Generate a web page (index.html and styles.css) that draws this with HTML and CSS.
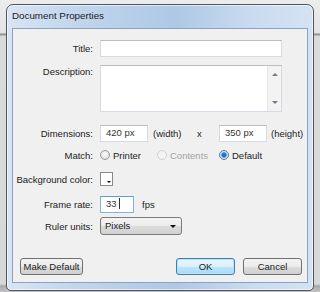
FILE: index.html
```html
<!DOCTYPE html>
<html lang="en">
<head>
    <meta charset="UTF-8">
    <title>Document Properties</title>
    <link rel="stylesheet" href="styles.css">
</head>
<body>

    <div class="window">
        <div class="titlebar">Document Properties</div>

        <div class="client">
            <div class="row row-title">
                <label class="lbl">Title:</label>
                <div class="field input w-title"></div>
            </div>

            <div class="row row-desc">
                <label class="lbl">Description:</label>
                <div class="field textarea">
                    <div class="scroll">
                        <span class="arr up"></span>
                        <span class="arr down"></span>
                    </div>
                </div>
            </div>

            <div class="row row-dim">
                <label class="lbl">Dimensions:</label>
                <div class="field input w-dim">420 px</div>
                <span class="unit">(width)</span>
                <span class="times">x</span>
                <div class="field input w-dim">350 px</div>
                <span class="unit-h">(height)</span>
            </div>

            <div class="row row-match">
                <label class="lbl">Match:</label>
                <div class="radio r1"><span class="dot"></span>Printer</div>
                <div class="radio r2 disabled"><span class="dot"></span>Contents</div>
                <div class="radio r3 checked"><span class="dot"></span>Default</div>
            </div>

            <div class="row row-bg">
                <label class="lbl">Background color:</label>
                <div class="swatch"><span class="tri"></span></div>
            </div>

            <div class="row row-fps">
                <label class="lbl">Frame rate:</label>
                <div class="field input w-fps focus">33<span class="caret"></span></div>
                <span class="fps">fps</span>
            </div>

            <div class="row row-ruler">
                <label class="lbl">Ruler units:</label>
                <div class="select">Pixels<span class="sel-arrow"></span></div>
            </div>

            <div class="buttons">
                <button class="btn btn-make">Make Default</button>
                <button class="btn btn-ok">OK</button>
                <button class="btn btn-cancel">Cancel</button>
            </div>
        </div>
    </div>

</body>
</html>
```

FILE: styles.css
```css
body {
    margin: 0;
    height: 292px;
    overflow: hidden;
    font-family: "Liberation Sans", Arial, sans-serif;
    font-size: 9.5px;
    color: #1e1e1e;
    background: linear-gradient(#ececec 0, #e4e4e4 33px, #8c8c8c 34px, #9a9a9a 35px, #dadada 36px, #d8d8d8 284px, #a8a8a8 286px, #c4c4c4 292px);
    padding-top: 4px;
    padding-left: 6px;
    box-sizing: border-box;
    white-space: nowrap;
}
.window {
    width: 308px;
    height: 287px;
    box-sizing: border-box;
    border: 1px solid #4f555c;
    border-radius: 7px 7px 5px 5px;
    padding: 0 5px 6px 5px;
    background: linear-gradient(90deg, #d9e5f3 0, #c3d7ee 20%, #aec8e6 55%, #c9dbef 80%, #d4e3f3 100%);
    box-shadow: inset 0 0 0 1px rgba(255, 255, 255, 0.6);
}
.titlebar {
    height: 23px;
    line-height: 22px;
    font-size: 9.8px;
    color: #1b1b1b;
}
.client {
    width: 296px;
    height: 255px;
    box-sizing: border-box;
    border: 1px solid #8ba3bf;
    background-color: #f0f0f0;
    padding-top: 11px;
}
.row {
    display: flex;
    align-items: center;
}
.lbl {
    width: 80px;
    flex: none;
    text-align: right;
    padding-right: 7px;
    box-sizing: content-box;
    color: #222;
}
.field {
    box-sizing: border-box;
    background-color: #fff;
    border: 1px solid #d5dbe2;
    border-top-color: #b9bec5;
}
.input {
    padding-left: 5px;
    line-height: 14px;
    color: #333;
}
.row-title { height: 17px; }
.w-title { width: 182px; height: 17px; }

.row-desc {
    height: 47px;
    margin-top: 8px;
    align-items: flex-start;
}
.row-desc .lbl { padding-top: 1px; }
.textarea {
    width: 182px;
    height: 47px;
    display: flex;
    justify-content: flex-end;
}
.scroll {
    width: 13px;
    background-color: #f3f3f3;
    border-left: 1px solid #e8e8e8;
    display: flex;
    flex-direction: column;
    justify-content: space-between;
    align-items: center;
    padding: 7px 0 7px;
}
.arr {
    width: 0;
    height: 0;
    border-left: 3px solid transparent;
    border-right: 3px solid transparent;
}
.arr.up { border-bottom: 3px solid #7a7a7a; }
.arr.down { border-top: 3px solid #7a7a7a; }

.row-dim {
    height: 17px;
    margin-top: 13px;
}
.w-dim { width: 48px; height: 17px; }
.unit {
    width: 42px;
    margin-left: 5px;
}
.times {
    width: 24px;
    padding-left: 2px;
    box-sizing: border-box;
}
.unit-h { margin-left: 4px; }

.row-match {
    height: 14px;
    margin-top: 6px;
}
.radio {
    display: flex;
    align-items: center;
    gap: 3px;
}
.r1 { width: 57px; }
.r2 { width: 62px; }
.dot {
    width: 10px;
    height: 10px;
    box-sizing: border-box;
    border-radius: 50%;
    border: 1px solid #9a9a9a;
    background: radial-gradient(circle at 50% 40%, #ffffff 0, #e4e4e4 60%, #cfcfcf 100%);
}
.disabled { color: #a3a3a3; }
.disabled .dot {
    border-color: #d2d2d2;
    background: #f3f3f3;
}
.checked .dot {
    border-color: #587ea8;
    background: radial-gradient(circle, #1b5fa8 0, #2f7ed0 2px, #9cc6ee 3px, #eef4fb 4px);
}

.row-bg {
    height: 14px;
    margin-top: 10px;
}
.swatch {
    width: 13px;
    height: 14px;
    box-sizing: border-box;
    border: 1px solid #8a8a8a;
    background-color: #fff;
    position: relative;
}
.tri {
    position: absolute;
    right: 1px;
    bottom: 2px;
    width: 0;
    height: 0;
    border-left: 2px solid transparent;
    border-right: 2px solid transparent;
    border-top: 2px solid #000;
}

.row-fps {
    height: 17px;
    margin-top: 10px;
}
.w-fps { width: 34px; height: 17px; }
.focus {
    border-color: #7eb4ea;
    border-top-color: #569de5;
}
.caret {
    display: inline-block;
    width: 1px;
    height: 11px;
    margin-left: 2px;
    background-color: #333;
    vertical-align: -2px;
}
.fps { margin-left: 8px; }

.row-ruler {
    height: 18px;
    margin-top: 4px;
}
.select {
    width: 82px;
    height: 18px;
    box-sizing: border-box;
    border: 1px solid #7a7a7a;
    border-radius: 3px;
    background: linear-gradient(#f4f4f4 0, #ebebeb 50%, #dcdcdc 51%, #d0d0d0 100%);
    padding-left: 4px;
    line-height: 16px;
    display: flex;
    justify-content: space-between;
    align-items: center;
    padding-right: 5px;
}
.sel-arrow {
    width: 0;
    height: 0;
    border-left: 3px solid transparent;
    border-right: 3px solid transparent;
    border-top: 3px solid #111;
}

.buttons {
    display: flex;
    margin-top: 23px;
    padding-left: 7px;
}
.btn {
    height: 17px;
    box-sizing: border-box;
    font-family: inherit;
    font-size: 9.5px;
    color: #222;
    border: 1px solid #707070;
    border-radius: 3px;
    background: linear-gradient(#f3f3f3 0, #ebebeb 50%, #dddddd 51%, #cfcfcf 100%);
    padding: 0;
    line-height: 15px;
    white-space: nowrap;
}
.btn-make { width: 63px; }
.btn-ok {
    width: 59px;
    margin-left: 93px;
    border-color: #3c7fb1;
    background: linear-gradient(#eaf6fd 0, #d9f0fc 50%, #bee6fd 51%, #a7d9f5 100%);
    box-shadow: inset 0 0 0 1px #b9e2f7;
}
.btn-cancel {
    width: 59px;
    margin-left: 8px;
}
```
